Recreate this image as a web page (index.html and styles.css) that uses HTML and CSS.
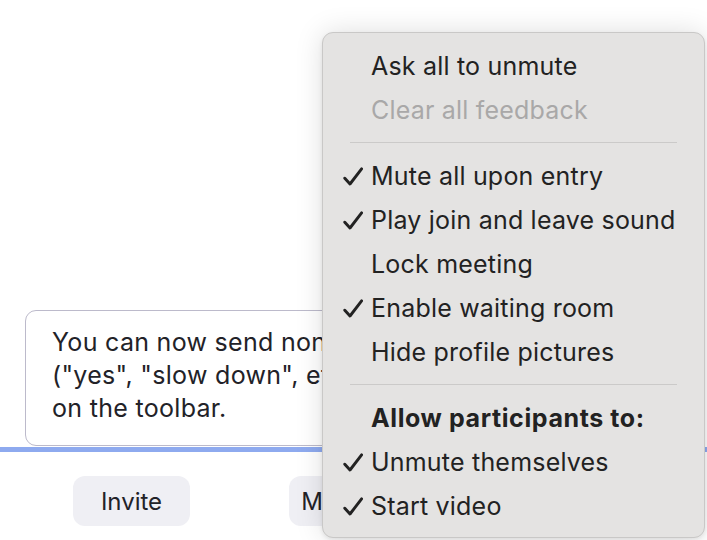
FILE: index.html
```html
<!DOCTYPE html>
<html lang="en">
<head>
    <meta charset="UTF-8">
    <title>Meeting</title>
    <link rel="stylesheet" href="styles.css">
</head>
<body>
    <div class="window">
        <div class="stage">
            <div class="tip">
                You can now send nonverbal feedback<br>
                ("yes", "slow down", etc.) using Reactions<br>
                on the toolbar.
            </div>
        </div>
        <div class="progress"></div>
        <div class="toolbar">
            <button class="tool-button">Invite</button>
            <button class="tool-button">Mute All</button>
        </div>

        <!-- menu "More" -->
        <div class="menu">
            <div class="menu-item">Ask all to unmute</div>
            <div class="menu-item disabled">Clear all feedback</div>
            <div class="menu-sep"></div>
            <div class="menu-item checked">Mute all upon entry</div>
            <div class="menu-item checked">Play join and leave sound</div>
            <div class="menu-item">Lock meeting</div>
            <div class="menu-item checked">Enable waiting room</div>
            <div class="menu-item">Hide profile pictures</div>
            <div class="menu-sep"></div>
            <div class="menu-item header">Allow participants to:</div>
            <div class="menu-item checked">Unmute themselves</div>
            <div class="menu-item checked">Start video</div>
        </div>
    </div>
</body>
</html>
```

FILE: styles.css
```css
* {
    box-sizing: border-box;
    font-family: 'Inter', 'Liberation Sans', sans-serif;
}

body {
    margin: 0;
    background: #fff;
    color: #222228;
}

.window {
    position: relative;
    width: 707px;
    height: 540px;
    overflow: hidden;
    display: flex;
    flex-direction: column;
}

.stage {
    height: 447px;
    display: flex;
    flex-direction: column;
    justify-content: flex-end;
    padding: 0 0 1px 25px;
}

.tip {
    width: 560px;
    height: 136px;
    padding: 15px 26px;
    border: 1px solid #bcbacb;
    border-radius: 11px;
    font-size: 25px;
    line-height: 33px;
    letter-spacing: 0.3px;
    white-space: nowrap;
    overflow: hidden;
}

.progress {
    height: 5px;
    background-color: #8eaaef;
}

.toolbar {
    display: flex;
    gap: 99px;
    padding: 24px 0 0 73px;
}

.tool-button {
    width: 117px;
    height: 50px;
    border: none;
    border-radius: 12px;
    background-color: #efeff4;
    color: #222228;
    font-size: 24px;
    padding: 0;
}

.menu {
    position: absolute;
    top: 32px;
    left: 322px;
    width: 383px;
    padding: 11px 0 9px 0;
    background-color: #e4e3e2;
    border: 1px solid #c9c8c7;
    border-radius: 11px;
    box-shadow: 0 0 28px rgba(0, 0, 0, 0.13), 0 2px 4px rgba(0, 0, 0, 0.08);
}

.menu-item {
    position: relative;
    height: 44px;
    line-height: 44px;
    padding-left: 48px;
    font-size: 25px;
    letter-spacing: 0.2px;
    color: #222;
}

.menu-item.disabled {
    color: #a9a8a8;
}

.menu-item.header {
    font-weight: 700;
    letter-spacing: 0.6px;
}

.menu-item.checked::before {
    content: '';
    position: absolute;
    left: 20px;
    top: 13px;
    width: 20px;
    height: 20px;
    background: url("data:image/svg+xml,%3Csvg xmlns='http://www.w3.org/2000/svg' viewBox='0 0 20 20'%3E%3Cpath d='M1.8 11.2 L7 17 L18.6 1.8' fill='none' stroke='%23222' stroke-width='2.9' stroke-linecap='round' stroke-linejoin='round'/%3E%3C/svg%3E") no-repeat;
}

.menu-sep {
    height: 1px;
    margin: 10px 27px 11px 27px;
    background-color: #cbcac9;
}
```
